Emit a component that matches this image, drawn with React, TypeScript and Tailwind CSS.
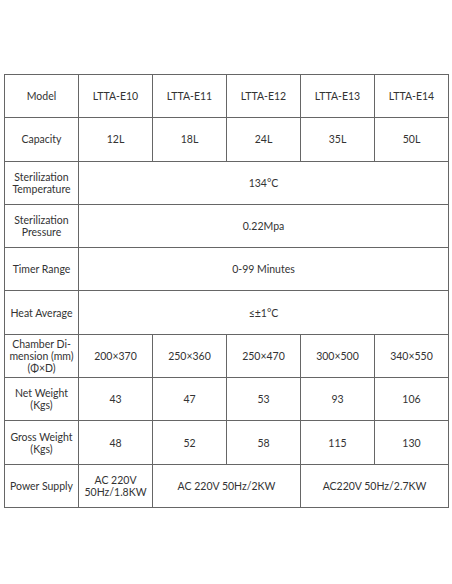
const models = ['LTTA-E10', 'LTTA-E11', 'LTTA-E12', 'LTTA-E13', 'LTTA-E14'];

type Cell = { text: React.ReactNode; span?: number };
type Row = { label: React.ReactNode; cells: Cell[] };

const rows: Row[] = [
  { label: 'Model', cells: models.map((m) => ({ text: m })) },
  { label: 'Capacity', cells: ['12L', '18L', '24L', '35L', '50L'].map((t) => ({ text: t })) },
  {
    label: (
      <>
        Sterilization
        <br />
        Temperature
      </>
    ),
    cells: [{ text: '134°C', span: 5 }],
  },
  {
    label: (
      <>
        Sterilization
        <br />
        Pressure
      </>
    ),
    cells: [{ text: '0.22Mpa', span: 5 }],
  },
  { label: 'Timer Range', cells: [{ text: '0-99 Minutes', span: 5 }] },
  { label: 'Heat Average', cells: [{ text: '≤±1°C', span: 5 }] },
  {
    label: (
      <>
        Chamber Di-
        <br />
        mension (mm)
        <br />
        (Φ×D)
      </>
    ),
    cells: ['200×370', '250×360', '250×470', '300×500', '340×550'].map((t) => ({ text: t })),
  },
  {
    label: (
      <>
        Net Weight
        <br />
        (Kgs)
      </>
    ),
    cells: ['43', '47', '53', '93', '106'].map((t) => ({ text: t })),
  },
  {
    label: (
      <>
        Gross Weight
        <br />
        (Kgs)
      </>
    ),
    cells: ['48', '52', '58', '115', '130'].map((t) => ({ text: t })),
  },
  {
    label: 'Power Supply',
    cells: [
      {
        text: (
          <>
            AC 220V
            <br />
            50Hz/1.8KW
          </>
        ),
      },
      { text: 'AC 220V 50Hz/2KW', span: 2 },
      { text: 'AC220V 50Hz/2.7KW', span: 2 },
    ],
  },
];

export default function App() {
  return (
    <main className="w-[452px] h-[584px] bg-white pt-[74px] pl-[4px]">
      <table
        className="table-fixed border-collapse w-[444px] text-center text-[10.5px] leading-[12px] text-[#333]"
        style={{ fontFamily: 'Lato, "Open Sans", sans-serif' }}
      >
        <colgroup>
          <col className="w-[74px]" />
          <col className="w-[74px]" />
          <col className="w-[74px]" />
          <col className="w-[74px]" />
          <col className="w-[74px]" />
          <col className="w-[74px]" />
        </colgroup>
        <tbody>
          {rows.map((row, i) => (
            <tr key={i} className="h-[43.3px]">
              <td className="border border-[#666] px-1 align-middle">{row.label}</td>
              {row.cells.map((c, j) => (
                <td key={j} colSpan={c.span} className="border border-[#666] px-1 align-middle">
                  {c.text}
                </td>
              ))}
            </tr>
          ))}
        </tbody>
      </table>
    </main>
  );
}
